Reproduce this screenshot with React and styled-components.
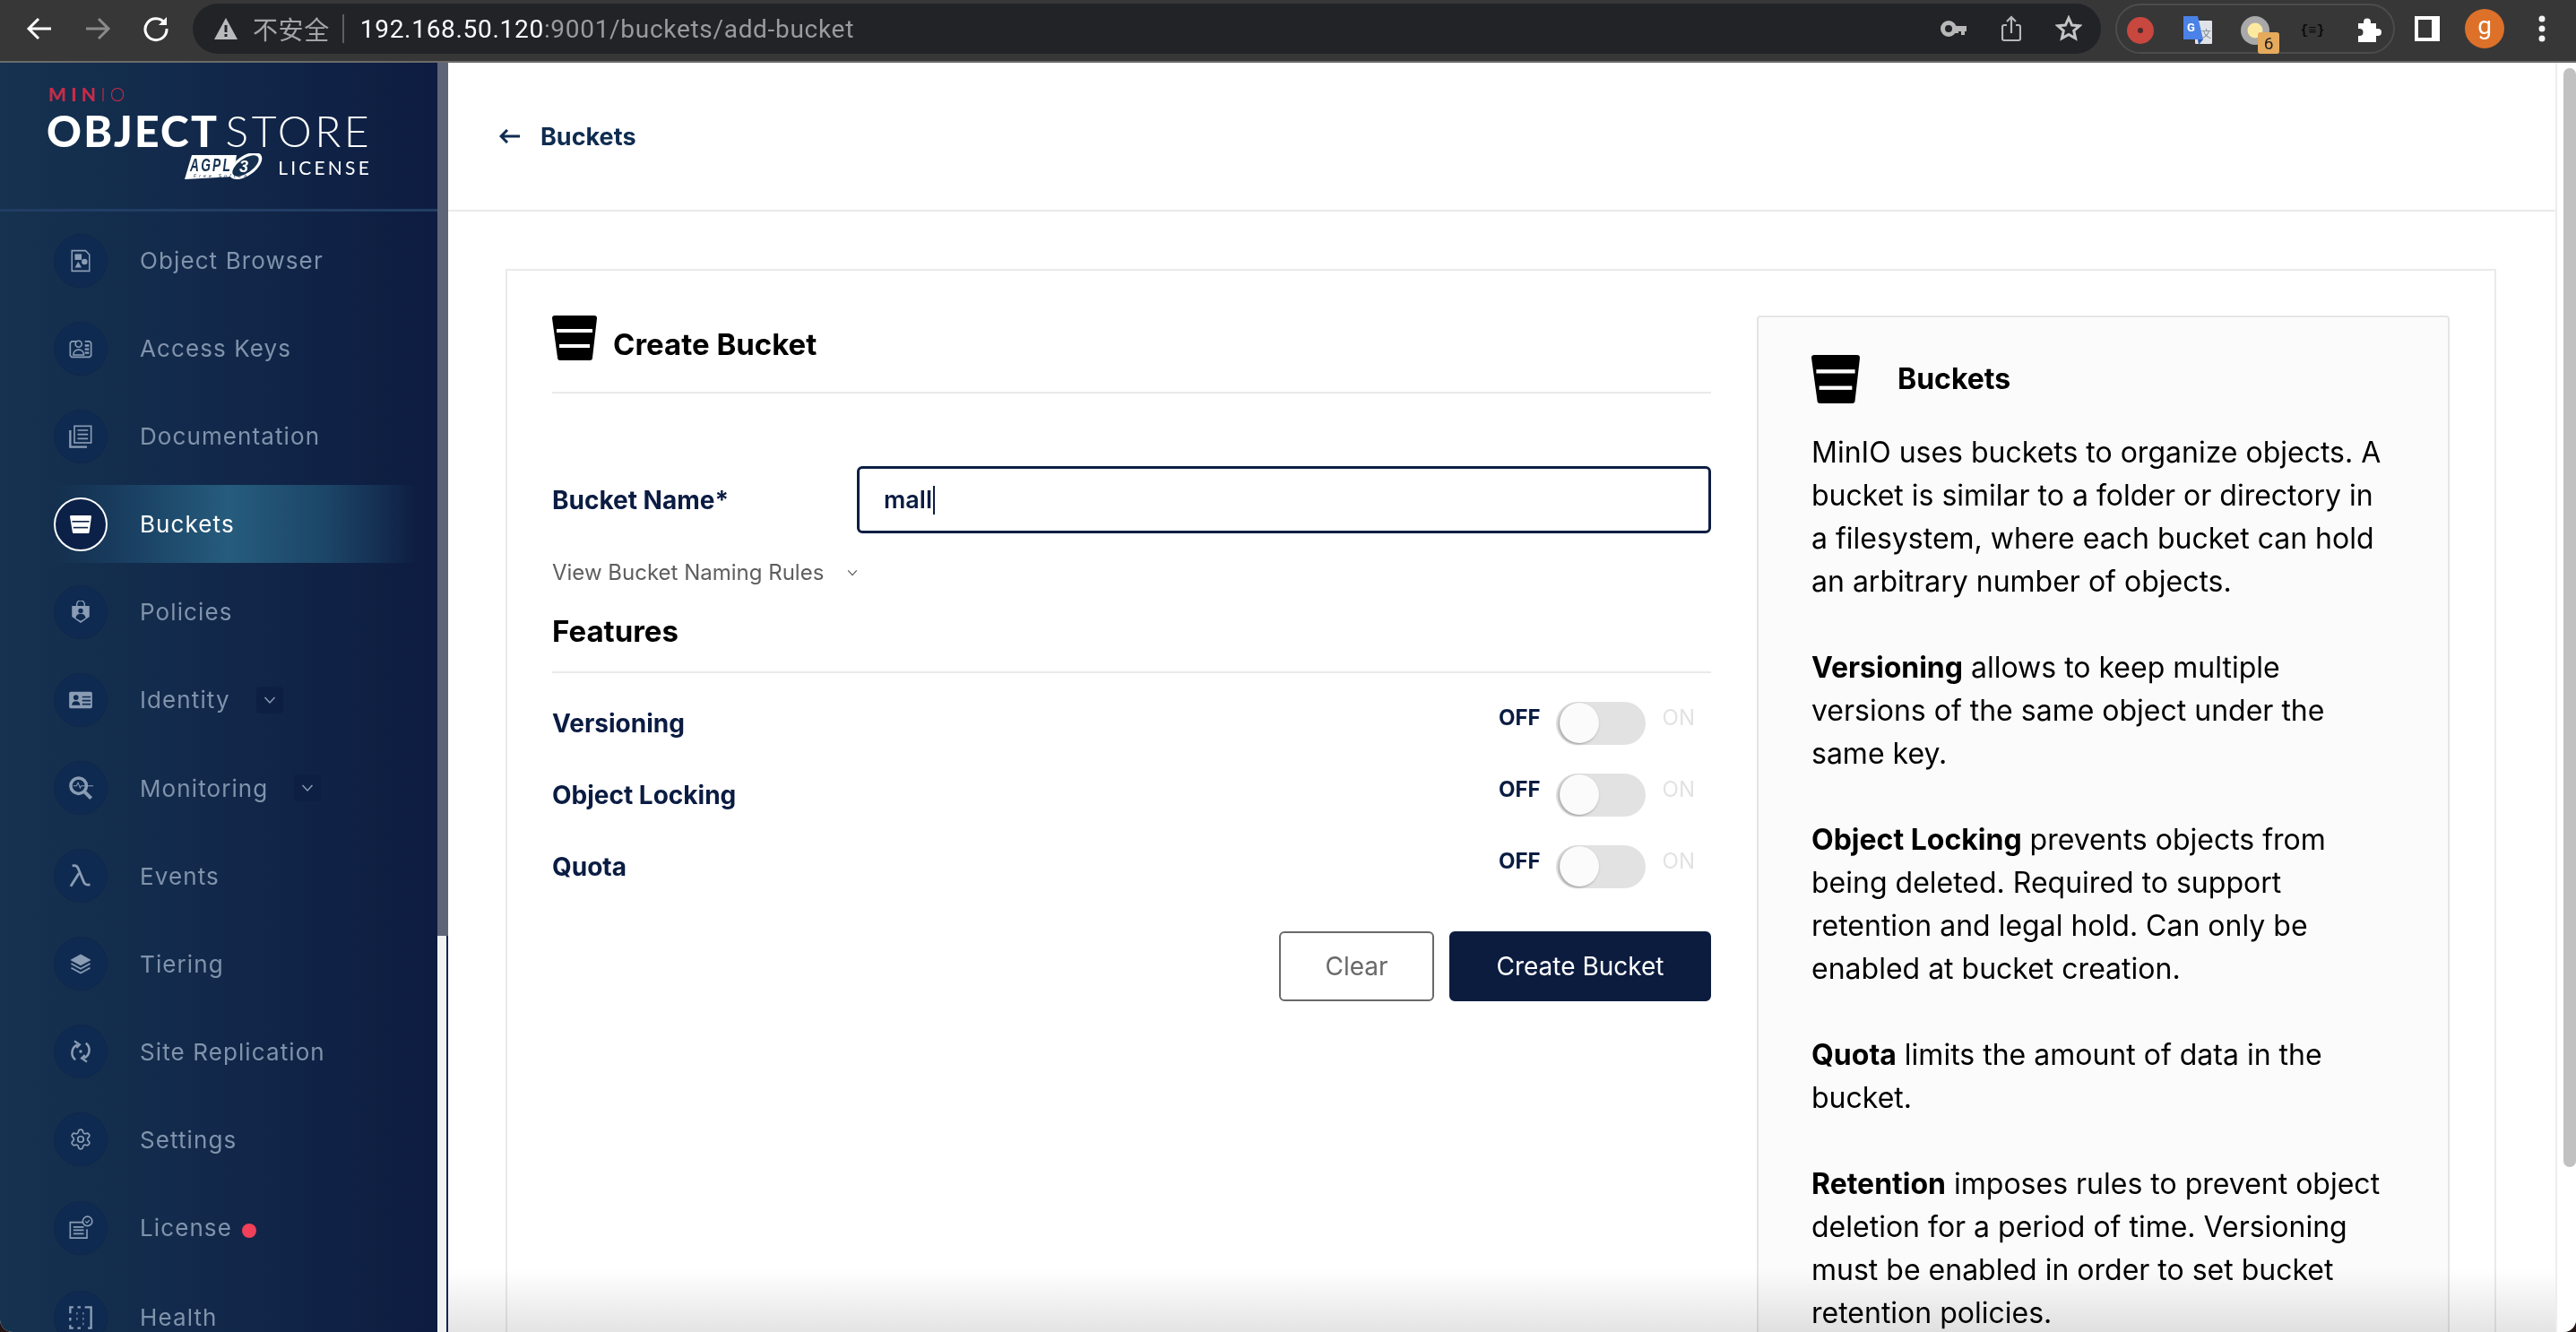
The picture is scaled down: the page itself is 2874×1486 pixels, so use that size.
import React from "react";
import styled, { createGlobalStyle } from "styled-components";
import { Settings } from "lucide-react";

const GlobalStyle = createGlobalStyle`
  html, body {
    margin: 0;
    height: 100%;
    overflow: hidden;
    background: #241416;
  }
  * {
    box-sizing: border-box;
  }
`;

const Frame = styled.div`
  height: 100vh;
  display: flex;
  flex-direction: column;
  overflow: hidden;
  border-radius: 0 0 14px 14px;
  background: #fff;
  font-family: Inter, "Liberation Sans", sans-serif;
`;

/* browser chrome */
const BrowserBar = styled.div`
  height: 70px;
  flex: none;
  display: flex;
  align-items: flex-start;
  padding-top: 4px;
  background: #373737;
  border-bottom: 2px solid #6b6b6b;
`;

const NavButtons = styled.div`
  width: 215px;
  height: 56px;
  flex: none;
  display: flex;
  align-items: center;
  padding-left: 11px;
`;

const NavBtn = styled.div`
  width: 65px;
  display: flex;
  justify-content: center;
  color: ${(p) => (p.$dim ? "#8a8a8a" : "#fff")};
`;

const AddressBar = styled.div`
  width: 2129px;
  height: 56px;
  flex: none;
  display: flex;
  align-items: center;
  padding: 0 4px 0 24px;
  border-radius: 28px;
  background: #212327;
`;

const SecurityText = styled.span`
  margin-left: 17px;
  padding-right: 14px;
  border-right: 2px solid #5c5e62;
  line-height: 32px;
  color: #a4a5a7;
  font-size: 28px;
  letter-spacing: 0.6px;
  font-family: "Noto Sans CJK SC", sans-serif;
`;

const Url = styled.div`
  margin-left: 18px;
  flex: 1;
  color: #9a9b9d;
  font-size: 28px;
  font-family: Roboto, sans-serif;
  letter-spacing: 0.7px;

  b {
    color: #fff;
    font-weight: 400;
  }
`;

const Slot = styled.div`
  position: relative;
  width: 64px;
  height: 56px;
  flex: none;
  display: flex;
  align-items: center;
  justify-content: center;
  color: ${(p) => p.$color || "#c0c0c0"};
`;

const ExtensionPill = styled.div`
  width: 312px;
  height: 56px;
  margin: 0 4px 0 16px;
  flex: none;
  display: flex;
  justify-content: center;
  border: 2px solid #4c4c4c;
  border-radius: 28px;
`;

const CodeExt = styled.span`
  color: #0b0b0b;
  font-size: 15px;
  font-weight: 700;
  font-family: "Liberation Mono", monospace;
`;

const Badge = styled.span`
  position: absolute;
  left: 35px;
  top: 30px;
  width: 24px;
  height: 24px;
  display: flex;
  align-items: center;
  justify-content: center;
  border-radius: 3px;
  background: #e6aa5c;
  color: #222;
  font-size: 19px;
  font-family: Roboto, sans-serif;
`;

const Avatar = styled.div`
  width: 44px;
  height: 44px;
  display: flex;
  align-items: center;
  justify-content: center;
  border-radius: 50%;
  background: #dd7129;
  color: #fff;
  font-size: 28px;
  line-height: 38px;
  padding-bottom: 6px;
  font-family: Roboto, sans-serif;
`;

/* page body */
const Body = styled.div`
  flex: 1;
  min-height: 0;
  display: flex;
`;

const Sidebar = styled.aside`
  width: 488px;
  flex: none;
  overflow: hidden;
  background: linear-gradient(90deg, #15324f 0%, #12294b 45%, #0d1c40 100%);
`;

const SideTrack = styled.div`
  width: 12px;
  flex: none;
  background: #f1f1f1;
  border-right: 2px solid #12264c;
`;

const SideThumb = styled.div`
  height: 974px;
  margin-right: -2px;
  background: #5f6579;
`;

const LogoBlock = styled.div`
  height: 166px;
  padding: 25px 76px 0 52px;
  display: flex;
  flex-direction: column;
  border-bottom: 3px solid #213d64;
`;

const MinioMark = styled.div`
  height: 26px;
  padding-left: 2px;
  color: #c72c48;
  font-size: 21px;
  line-height: 20px;
  font-weight: 900;
  font-family: Lato, sans-serif;
  letter-spacing: 5.2px;

  span {
    font-weight: 300;
  }
`;

const ProductName = styled.div`
  height: 50px;
  display: flex;
  justify-content: space-between;
  color: #fff;
  font-size: 48px;
  line-height: 50px;
  font-weight: 900;
  font-family: Lato, sans-serif;
  letter-spacing: 2.2px;
  white-space: nowrap;

  span {
    font-weight: 300;
    letter-spacing: 3.4px;
    margin-right: -3px;
  }
`;

const LicenseRow = styled.div`
  margin-right: -3px;
  display: flex;
  align-items: center;
  justify-content: flex-end;
  gap: 14px;
  color: #fff;
  font-size: 21px;
  font-family: Lato, sans-serif;
  letter-spacing: 3.2px;
`;

const NavList = styled.nav`
  padding-top: 11px;
`;

const NavItem = styled.div`
  height: 87px;
  margin: ${(p) => (p.$lower ? "5px 22px 13px 60px" : "0 22px 11.1px 60px")};
  display: flex;
  align-items: center;
  color: ${(p) => (p.$active ? "#fff" : "#8093ab")};
  font-size: 26px;
  letter-spacing: 1.1px;
  font-family: Inter, sans-serif;
  background: ${(p) =>
    p.$active
      ? "linear-gradient(90deg, transparent 0%, #1a4163 22%, #265c7d 48%, #1c4668 74%, transparent 100%)"
      : "none"};
`;

const NavCircle = styled.div`
  width: 60px;
  height: 60px;
  flex: none;
  margin-right: 36px;
  display: flex;
  align-items: center;
  justify-content: center;
  border-radius: 50%;
  background: ${(p) => (p.$active ? "#0c2148" : "#0f2a50")};
  border: ${(p) => (p.$active ? "2px solid #fff" : "1px solid #0e274c")};
  color: ${(p) => (p.$active ? "#fff" : "#8a9db4")};
`;

const ChevronBox = styled.div`
  width: 30px;
  height: 30px;
  margin-left: 29px;
  display: flex;
  align-items: center;
  justify-content: center;
  border-radius: 4px;
  background: #0e1f44;
  color: #8a9bb2;
`;

const AlertDot = styled.span`
  width: 16px;
  height: 16px;
  margin: 6px 0 0 11px;
  border-radius: 50%;
  background: #f0405a;
`;

const Main = styled.main`
  position: relative;
  flex: 1;
  min-width: 0;
  overflow: hidden;
`;

const PageHeader = styled.header`
  height: 166px;
  padding-left: 57px;
  display: flex;
  align-items: center;
  gap: 23px;
  border-bottom: 2px solid #eaeaea;
  color: #0f2c50;
  font-size: 27px;
  font-weight: 700;
`;

const Card = styled.section`
  margin: 64px 66px 0 64px;
  padding: 50px;
  display: flex;
  gap: 51px;
  border: 2px solid #eaeaea;
`;

const FormColumn = styled.div`
  width: 1293px;
  flex: none;
`;

const FormHeader = styled.div`
  padding-bottom: 33px;
  display: flex;
  align-items: flex-start;
  gap: 18px;
  border-bottom: 2px solid #eaeaea;
  color: #000;
`;

const Title = styled.h2`
  margin: 13px 0 0;
  font-size: 33px;
  line-height: 39px;
  font-weight: 700;
`;

const FieldRow = styled.div`
  margin-top: 81px;
  display: flex;
  align-items: center;
`;

const FieldLabel = styled.label`
  width: 340px;
  flex: none;
  color: #0a1c42;
  font-size: 28px;
  font-weight: 700;
`;

const InputBox = styled.div`
  flex: 1;
  height: 75px;
  padding-left: 27px;
  display: flex;
  align-items: center;
  border: 3px solid #0c1e42;
  border-radius: 6px;
  color: #0a1c42;
  font-size: 27px;
  font-weight: 600;
`;

const Caret = styled.span`
  width: 2px;
  height: 32px;
  margin-left: 1px;
  background: #0c1e42;
`;

const RulesLink = styled.div`
  margin-top: 29px;
  display: flex;
  align-items: center;
  gap: 25px;
  color: #5e5e5e;
  font-size: 24px;
  line-height: 30px;
`;

const SectionTitle = styled.h3`
  margin: 30px 0 0;
  padding-bottom: 25px;
  border-bottom: 2px solid #eaeaea;
  color: #000;
  font-size: 33px;
  line-height: 40px;
  font-weight: 700;
`;

const SwitchList = styled.div`
  margin-top: 32px;
  display: flex;
  flex-direction: column;
  gap: 32px;
`;

const SwitchRow = styled.div`
  height: 48px;
  padding-right: 18px;
  display: flex;
  align-items: center;
`;

const SwitchLabel = styled.span`
  flex: 1;
  color: #0a1c42;
  font-size: 28px;
  font-weight: 700;
`;

const StateText = styled.span`
  margin-bottom: 14px;
  color: ${(p) => (p.$on ? "#e2e2e2" : "#0a1c42")};
  font-size: 24px;
  font-weight: ${(p) => (p.$on ? 400 : 700)};
`;

const Track = styled.div`
  width: 100px;
  height: 48px;
  margin: 0 19px 0 17px;
  padding: 1px 0 0 4px;
  border-radius: 24px;
  background: #e2e2e2;
`;

const Thumb = styled.div`
  width: 44px;
  height: 45px;
  border-radius: 50%;
  background: #fbfbfb;
  box-shadow: -1px 1px 3px rgba(0, 0, 0, 0.35);
`;

const ButtonRow = styled.div`
  margin-top: 48px;
  display: flex;
  justify-content: flex-end;
  gap: 17px;
`;

const Button = styled.button`
  width: ${(p) => (p.$primary ? "292px" : "173px")};
  height: 78px;
  padding: 0;
  border: 2px solid ${(p) => (p.$primary ? "#0c1c3f" : "#696969")};
  border-radius: 6px;
  background: ${(p) => (p.$primary ? "#0c1c3f" : "#fff")};
  color: ${(p) => (p.$primary ? "#fff" : "#696969")};
  font-size: 28px;
  font-family: Inter, sans-serif;
`;

const InfoPanel = styled.aside`
  width: 773px;
  flex: none;
  padding: 42px 72px 60px 59px;
  border: 2px solid #e5e5e5;
  border-radius: 4px;
  background: #fbfbfb;
  color: #000;
  font-size: 32px;
  line-height: 48px;
`;

const InfoHeader = styled.div`
  margin-bottom: 31px;
  display: flex;
  align-items: center;
  gap: 42px;
  font-weight: 700;
`;

const InfoText = styled.p`
  margin: 0 0 48px;
`;

const PageFade = styled.div`
  position: absolute;
  left: 0;
  right: 0;
  bottom: 0;
  height: 70px;
  pointer-events: none;
  mix-blend-mode: multiply;
  background: linear-gradient(180deg, #ffffff, #e4e4e4);
`;

const MainTrack = styled.div`
  width: 23px;
  flex: none;
  padding: 6px 0 0 7px;
  border-left: 2px solid #eeeeee;
  background: #fff;
`;

const MainThumb = styled.div`
  height: 1226px;
  border-radius: 8px;
  background: #c1c1c1;
`;

const BucketIcon = ({ size = 50, height, lines = "#fff", fill = "#000" }) => (
  <svg width={size} height={height || size} viewBox="0 0 50 50" preserveAspectRatio="none">
    <path
      d="M3 0h44a3 3 0 0 1 3 3l-5 44a3 3 0 0 1-3 3H9a3 3 0 0 1-3-3L0 3a3 3 0 0 1 3-3z"
      fill={fill}
    />
    <rect x="5" y="15" width="40" height="4" fill={lines} />
    <rect x="8" y="32" width="34" height="4" fill={lines} />
  </svg>
);

const Glyph = ({ children, size = 26 }) => (
  <svg width={size} height={size} viewBox="0 0 24 24" fill="none" stroke="currentColor" strokeWidth="1.4">
    {children}
  </svg>
);

const navIcons = {
  browser: (
    <Glyph>
      <path d="M3 1.5h14l4 4v17H3z" />
      <rect x="6" y="5" width="7" height="6" fill="currentColor" stroke="none" />
      <circle cx="16" cy="13" r="3" fill="currentColor" stroke="none" />
      <path d="M6 19l3.5-6 3.5 6z" fill="currentColor" stroke="none" />
    </Glyph>
  ),
  keys: (
    <Glyph size={28}>
      <path d="M8 5H3.5L2 6.5v12L3.5 20h17l1.5-1.5v-12L20.500 5H16" />
      <circle cx="10" cy="7.500" r="3" />
      <path d="M5 18c0-3 2-5 5-5s5 2 5 5z" />
      <path d="M16 9h4M16 12.500h4M16 16h4" strokeWidth="2" />
    </Glyph>
  ),
  docs: (
    <Glyph size={28}>
      <rect x="6" y="2" width="16" height="16" />
      <path d="M9 6h10M9 10h10M9 14h10" />
      <path d="M2 6v16h16" strokeWidth="2" />
    </Glyph>
  ),
  policies: (
    <Glyph>
      <path d="M8 6V4a4 4 0 0 1 8 0v2" />
      <path d="M3 5.500h18v11L12 23l-9-6.500z" fill="currentColor" stroke="none" />
      <circle cx="12" cy="10.500" r="2.500" fill="#0f2a50" stroke="none" />
      <path d="M7 18c0-3 2-4.500 5-4.500s5 1.500 5 4.500l-5 3z" fill="#0f2a50" stroke="none" />
    </Glyph>
  ),
  identity: (
    <Glyph size={28}>
      <rect x="1" y="4" width="22" height="16" rx="1.500" fill="currentColor" stroke="none" />
      <circle cx="7.500" cy="9.500" r="2.500" fill="#0f2a50" stroke="none" />
      <path d="M3.500 17c0-2.500 1.500-4 4-4s4 1.500 4 4z" fill="#0f2a50" stroke="none" />
      <path d="M13.500 9h8M13.500 12.500h8M13.500 16h8" stroke="#0f2a50" />
    </Glyph>
  ),
  monitoring: (
    <Glyph size={28}>
      <circle cx="10" cy="10" r="7.500" strokeWidth="3" />
      <path d="M15.500 15.500L22 22" strokeWidth="3.500" />
      <path d="M5 10h3l1.500-3 2 5 1-2H24" strokeWidth="0.9" />
    </Glyph>
  ),
  events: (
    <Glyph size={28}>
      <path d="M4 2.500c4-1 5 .5 6.500 4.500L15 18c1 2.500 2.500 3 6 2.500" strokeWidth="2.400" />
      <path d="M10.500 9.500L2.500 22" strokeWidth="2.400" />
    </Glyph>
  ),
  tiering: (
    <Glyph size={28}>
      <path d="M12 3l10 5.500L12 14 2 8.500z" fill="currentColor" stroke="none" />
      <path d="M3 12l9 5 9-5M3 16l9 5 9-5" strokeWidth="1.500" />
    </Glyph>
  ),
  replication: (
    <Glyph size={28}>
      <path d="M9 5.500A8.500 8.500 0 0 0 7 20" strokeWidth="2.200" />
      <path d="M15 18.500A8.500 8.500 0 0 0 17 4" strokeWidth="2.200" />
      <path d="M6 2l5 3.500-3 3M18 22l-5-3.500 3-3" strokeWidth="2" />
      <circle cx="12" cy="12" r="1.500" fill="currentColor" stroke="none" />
    </Glyph>
  ),
  license: (
    <Glyph size={28}>
      <path d="M14 6.500H2v15h16V13" />
      <path d="M5 11h10M5 14h10M5 17.500h10" strokeWidth="1.600" />
      <circle cx="18.500" cy="5.500" r="4.500" />
      <path d="M16.500 5.500l1.500 1.500 2.500-2.500" strokeWidth="1" />
    </Glyph>
  ),
  health: (
    <Glyph size={28}>
      <path d="M2 8V2h3M9 2h3M16 2h6v20h-3M2 12v3M2 19v3h3M9 22h3" strokeWidth="2" />
      <path d="M8 8h1M14 8h1M8 13h1M14 13h1M14 18h1" strokeWidth="2.200" />
    </Glyph>
  ),
};

const Chevron = ({ size = 16 }) => (
  <svg width={size} height={size} viewBox="0 0 16 16" fill="none" stroke="currentColor" strokeWidth="1.500">
    <path d="M2.500 5L8 11l5.500-6" />
  </svg>
);

const navItems = [
  { label: "Object Browser", icon: navIcons.browser },
  { label: "Access Keys", icon: navIcons.keys },
  { label: "Documentation", icon: navIcons.docs },
  { label: "Buckets", active: true },
  { label: "Policies", icon: navIcons.policies },
  { label: "Identity", icon: navIcons.identity, expandable: true },
  { label: "Monitoring", icon: navIcons.monitoring, expandable: true },
  { label: "Events", icon: navIcons.events },
  { label: "Tiering", icon: navIcons.tiering },
  { label: "Site Replication", icon: navIcons.replication },
  { label: "Settings", icon: <Settings size={26} strokeWidth={1.6} /> },
  { label: "License", icon: navIcons.license, alert: true, lower: true },
  { label: "Health", icon: navIcons.health },
];

const features = ["Versioning", "Object Locking", "Quota"];

export default function App() {
  return (
    <Frame>
      <GlobalStyle />
      <BrowserBar>
        <NavButtons>
          <NavBtn>
            <svg width="30" height="30" viewBox="0 0 30 30" fill="none" stroke="currentColor" strokeWidth="3">
              <path d="M28 15H4M14 4L3 15l11 11" />
            </svg>
          </NavBtn>
          <NavBtn $dim>
            <svg width="30" height="30" viewBox="0 0 30 30" fill="none" stroke="currentColor" strokeWidth="3">
              <path d="M2 15h24M16 4l11 11-11 11" />
            </svg>
          </NavBtn>
          <NavBtn>
            <svg width="30" height="30" viewBox="0 0 30 30" fill="none" stroke="currentColor" strokeWidth="3">
              <path d="M25 9A12 12 0 1 0 27 15" />
              <path d="M27 2v9h-9z" fill="currentColor" stroke="none" />
            </svg>
          </NavBtn>
        </NavButtons>
        <AddressBar>
          <svg width="26" height="24" viewBox="0 0 26 24">
            <path d="M13 0l13 24H0z" fill="#b9babb" />
            <rect x="11.500" y="8" width="3" height="8" fill="#212327" />
            <rect x="11.500" y="18" width="3" height="3" fill="#212327" />
          </svg>
          <SecurityText>不安全</SecurityText>
          <Url>
            <b>192.168.50.120</b>:9001/buckets/add-bucket
          </Url>
          <Slot>
            <svg width="30" height="20" viewBox="0 0 30 20">
              <circle cx="9" cy="10" r="6.500" fill="none" stroke="#b8b8b8" strokeWidth="5" />
              <path d="M16 7h13v6h-2v4h-4v-4h-3v2h-4z" fill="#b8b8b8" />
            </svg>
          </Slot>
          <Slot>
            <svg width="22" height="30" viewBox="0 0 22 30" fill="none" stroke="#b8b8b8" strokeWidth="2.200">
              <path d="M6 11H3a2 2 0 0 0-2 2v13a2 2 0 0 0 2 2h16a2 2 0 0 0 2-2V13a2 2 0 0 0-2-2h-3M11 20V2M6 7l5-5 5 5" />
            </svg>
          </Slot>
          <Slot>
            <svg width="30" height="30" viewBox="0 0 30 30" fill="none" stroke="#c4c4c4" strokeWidth="3">
              <path d="M15 3l3.600 8 8.400.8-6.300 5.600 1.900 8.400L15 21.400 7.400 25.800l1.900-8.400L3 11.800l8.400-.8z" />
            </svg>
          </Slot>
        </AddressBar>
        <ExtensionPill>
          <Slot>
            <svg width="30" height="30" viewBox="0 0 30 30">
              <circle cx="15" cy="15" r="15" fill="#c8473f" />
              <circle cx="15" cy="15" r="3" fill="#4a2a2a" />
            </svg>
          </Slot>
          <Slot>
            <svg width="32" height="32" viewBox="0 0 32 32">
              <rect x="13" y="5" width="19" height="26" rx="1" fill="#dfe3e8" />
              <path d="M0 0h16l6 26H0z" fill="#4a82e8" />
              <path d="M16 26h6l-5 6z" fill="#2a56b0" />
              <text x="4" y="17" fill="#fff" fontSize="13" fontWeight="700" fontFamily="Roboto, sans-serif">G</text>
              <text x="20" y="24" fill="#74808c" fontSize="11" fontFamily="'Noto Sans CJK SC', sans-serif">文</text>
            </svg>
          </Slot>
          <Slot>
            <svg width="32" height="32" viewBox="0 0 32 32">
              <circle cx="16" cy="16" r="16" fill="#a9a9a9" />
              <circle cx="16" cy="16" r="8.500" fill="#fbeaa0" />
            </svg>
            <Badge>6</Badge>
          </Slot>
          <Slot>
            <CodeExt>{"{≡}"}</CodeExt>
          </Slot>
          <Slot>
            <svg width="28" height="28" viewBox="0 0 28 28" fill="#fff">
              <path d="M1 6h6V4.500a4 4 0 0 1 8 0V6h6v6h2a4 4 0 0 1 0 8h-2v7H1v-7h1.500a3.500 3.500 0 0 0 0-8H1z" />
            </svg>
          </Slot>
        </ExtensionPill>
        <Slot>
          <svg width="28" height="28" viewBox="0 0 28 28">
            <rect width="28" height="28" fill="#fff" />
            <rect x="4" y="4" width="15" height="20" fill="#373737" />
          </svg>
        </Slot>
        <Slot>
          <Avatar>g</Avatar>
        </Slot>
        <Slot $color="#fff">
          <svg width="8" height="30" viewBox="0 0 8 30" fill="#f2f2f2">
            <circle cx="4" cy="4" r="3.500" />
            <circle cx="4" cy="15" r="3.500" />
            <circle cx="4" cy="26" r="3.500" />
          </svg>
        </Slot>
      </BrowserBar>

      <Body>
        <Sidebar>
          <LogoBlock>
            <MinioMark>
              MIN<span>IO</span>
            </MinioMark>
            <ProductName>
              OBJECT<span>STORE</span>
            </ProductName>
            <LicenseRow>
              <svg width="90" height="30" viewBox="0 0 90 30">
                <path d="M8 2h50l-4 24 -54 3z" fill="#fff" />
                <ellipse cx="68" cy="14" rx="21" ry="11" fill="#fff" transform="rotate(-35 68 14)" />
                <ellipse cx="68" cy="14" rx="17" ry="8" fill="#15304f" transform="rotate(-35 68 14)" />
                <text x="6" y="20" fill="#15304f" fontSize="20" fontStyle="italic" fontWeight="700" fontFamily="Liberation Sans, sans-serif" textLength="47" lengthAdjust="spacingAndGlyphs">AGPL</text>
                <text x="10" y="27" fill="#15304f" fontSize="5" fontStyle="italic" fontFamily="Liberation Sans, sans-serif">Free Software</text>
                <text x="61" y="21" fill="#fff" fontSize="18" fontStyle="italic" fontWeight="700" fontFamily="Liberation Sans, sans-serif">3</text>
              </svg>
              LICENSE
            </LicenseRow>
          </LogoBlock>
          <NavList>
            {navItems.map((item) => (
              <NavItem key={item.label} $active={item.active} $lower={item.lower}>
                <NavCircle $active={item.active}>
                  {item.active ? (
                    <BucketIcon size={24} height={20} fill="#fff" lines="#0c2148" />
                  ) : (
                    item.icon
                  )}
                </NavCircle>
                {item.label}
                {item.expandable && (
                  <ChevronBox>
                    <Chevron />
                  </ChevronBox>
                )}
                {item.alert && <AlertDot />}
              </NavItem>
            ))}
          </NavList>
        </Sidebar>
        <SideTrack>
          <SideThumb />
        </SideTrack>

        <Main>
          <PageHeader>
            <svg width="23" height="16" viewBox="0 0 23 16" fill="none" stroke="#0f2c50" strokeWidth="3">
              <path d="M23 8H3M9 1L2 8l7 7" />
            </svg>
            Buckets
          </PageHeader>
          <Card>
            <FormColumn>
              <FormHeader>
                <BucketIcon size={50} />
                <Title>Create Bucket</Title>
              </FormHeader>
              <FieldRow>
                <FieldLabel>Bucket Name*</FieldLabel>
                <InputBox>
                  mall
                  <Caret />
                </InputBox>
              </FieldRow>
              <RulesLink>
                View Bucket Naming Rules
                <Chevron size={14} />
              </RulesLink>
              <SectionTitle>Features</SectionTitle>
              <SwitchList>
                {features.map((name) => (
                  <SwitchRow key={name}>
                    <SwitchLabel>{name}</SwitchLabel>
                    <StateText>OFF</StateText>
                    <Track>
                      <Thumb />
                    </Track>
                    <StateText $on>ON</StateText>
                  </SwitchRow>
                ))}
              </SwitchList>
              <ButtonRow>
                <Button>Clear</Button>
                <Button $primary>Create Bucket</Button>
              </ButtonRow>
            </FormColumn>
            <InfoPanel>
              <InfoHeader>
                <BucketIcon size={54} />
                Buckets
              </InfoHeader>
              <InfoText>
                MinIO uses buckets to organize objects. A bucket is similar to a folder or directory in a
                filesystem, where each bucket can hold an arbitrary number of objects.
              </InfoText>
              <InfoText>
                <b>Versioning</b> allows to keep multiple versions of the same object under the same key.
              </InfoText>
              <InfoText>
                <b>Object Locking</b> prevents objects from being deleted. Required to support retention and
                legal hold. Can only be enabled at bucket creation.
              </InfoText>
              <InfoText>
                <b>Quota</b> limits the amount of data in the bucket.
              </InfoText>
              <InfoText>
                <b>Retention</b> imposes rules to prevent object deletion for a period of time. Versioning
                must be enabled in order to set bucket retention policies.
              </InfoText>
            </InfoPanel>
          </Card>
          <PageFade />
        </Main>
        <MainTrack>
          <MainThumb />
        </MainTrack>
      </Body>
    </Frame>
  );
}
